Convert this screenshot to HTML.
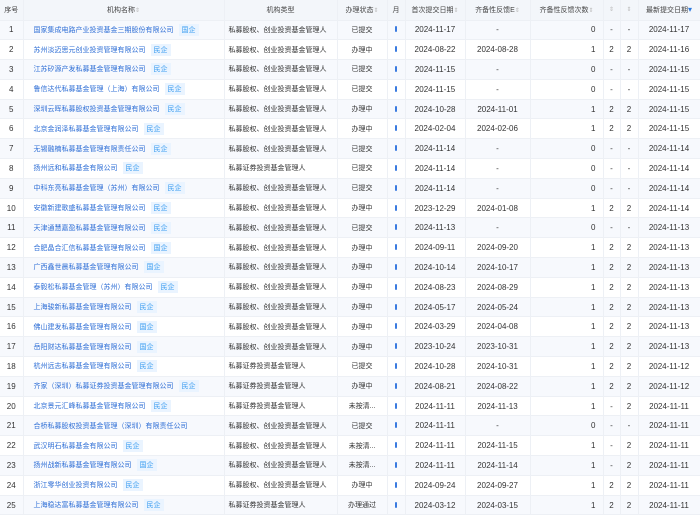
<!DOCTYPE html><html><head><meta charset="utf-8"><style>
*{margin:0;padding:0;box-sizing:border-box}
body{width:700px;height:516px;overflow:hidden;background:#fff;font-family:"Liberation Sans","Noto Sans CJK SC",sans-serif;font-size:7px;color:#333}
table{border-collapse:collapse;table-layout:fixed;width:700px}
td,th{height:19.8px;white-space:nowrap;overflow:hidden;border-bottom:1px solid #edf0f5;border-right:1px solid #edf0f5;text-align:center;padding:0 2px;font-weight:normal}
th{background:#f3f6fa;color:#444;height:20px}
tr:nth-child(even) td{background:#f7f9fd}
td{font-size:8px}
td.n,td.t,td.c{font-size:7px}
td.n{text-align:left;color:#2f6fd6;padding-left:10px}
td.t{text-align:left;padding-left:4px}
td.r{text-align:right;padding-right:7px}
td.fx,th.fx{box-shadow:3px 0 4px -1px rgba(0,0,0,.12)}
.g{display:inline-block;background:#eaf4ff;color:#3a9cf0;padding:1px 3px;margin-left:5px}
.s{color:#bbb;font-size:6px}
.b{display:inline-block;width:2px;height:6px;background:#3a7be0;border-radius:1px}
.d{color:#2f7be0;font-size:8px}
</style></head><body><table>
<colgroup><col style="width:23px"><col style="width:201px"><col style="width:113px"><col style="width:50px"><col style="width:18px"><col style="width:60px"><col style="width:65px"><col style="width:73px"><col style="width:17px"><col style="width:18px"><col style="width:62px"></colgroup>
<tr><th>序号</th><th class="fx">机构名称<span class="s">⇕</span></th><th>机构类型</th><th>办理状态<span class="s">⇕</span></th><th>月</th><th>首次提交日期<span class="s">⇕</span></th><th>齐备性反馈E<span class="s">⇕</span></th><th>齐备性反馈次数<span class="s">⇕</span></th><th><span class="s">⇕</span></th><th><span class="s">⇕</span></th><th>最新提交日期<span class="d">▾</span></th></tr>
<tr><td>1</td><td class="n fx">国家集成电路产业投资基金三期股份有限公司<span class="g">国企</span></td><td class="t">私募股权、创业投资基金管理人</td><td class="c">已提交</td><td><i class="b"></i></td><td>2024-11-17</td><td>-</td><td class="r">0</td><td>-</td><td>-</td><td>2024-11-17</td></tr>
<tr><td>2</td><td class="n fx">苏州淡迈思元创业投资管理有限公司<span class="g">民企</span></td><td class="t">私募股权、创业投资基金管理人</td><td class="c">办理中</td><td><i class="b"></i></td><td>2024-08-22</td><td>2024-08-28</td><td class="r">1</td><td>2</td><td>2</td><td>2024-11-16</td></tr>
<tr><td>3</td><td class="n fx">江苏矽源产发私募基金管理有限公司<span class="g">民企</span></td><td class="t">私募股权、创业投资基金管理人</td><td class="c">已提交</td><td><i class="b"></i></td><td>2024-11-15</td><td>-</td><td class="r">0</td><td>-</td><td>-</td><td>2024-11-15</td></tr>
<tr><td>4</td><td class="n fx">鲁信达代私募基金管理（上海）有限公司<span class="g">民企</span></td><td class="t">私募股权、创业投资基金管理人</td><td class="c">已提交</td><td><i class="b"></i></td><td>2024-11-15</td><td>-</td><td class="r">0</td><td>-</td><td>-</td><td>2024-11-15</td></tr>
<tr><td>5</td><td class="n fx">深圳云晖私募股权投资基金管理有限公司<span class="g">民企</span></td><td class="t">私募股权、创业投资基金管理人</td><td class="c">办理中</td><td><i class="b"></i></td><td>2024-10-28</td><td>2024-11-01</td><td class="r">1</td><td>2</td><td>2</td><td>2024-11-15</td></tr>
<tr><td>6</td><td class="n fx">北京金润泽私募基金管理有限公司<span class="g">民企</span></td><td class="t">私募股权、创业投资基金管理人</td><td class="c">办理中</td><td><i class="b"></i></td><td>2024-02-04</td><td>2024-02-06</td><td class="r">1</td><td>2</td><td>2</td><td>2024-11-15</td></tr>
<tr><td>7</td><td class="n fx">无锡融楠私募基金管理有限责任公司<span class="g">民企</span></td><td class="t">私募股权、创业投资基金管理人</td><td class="c">已提交</td><td><i class="b"></i></td><td>2024-11-14</td><td>-</td><td class="r">0</td><td>-</td><td>-</td><td>2024-11-14</td></tr>
<tr><td>8</td><td class="n fx">扬州远和私募基金有限公司<span class="g">民企</span></td><td class="t">私募证券投资基金管理人</td><td class="c">已提交</td><td><i class="b"></i></td><td>2024-11-14</td><td>-</td><td class="r">0</td><td>-</td><td>-</td><td>2024-11-14</td></tr>
<tr><td>9</td><td class="n fx">中科东亮私募基金管理（苏州）有限公司<span class="g">民企</span></td><td class="t">私募股权、创业投资基金管理人</td><td class="c">已提交</td><td><i class="b"></i></td><td>2024-11-14</td><td>-</td><td class="r">0</td><td>-</td><td>-</td><td>2024-11-14</td></tr>
<tr><td>10</td><td class="n fx">安徽新建歌盛私募基金管理有限公司<span class="g">民企</span></td><td class="t">私募股权、创业投资基金管理人</td><td class="c">办理中</td><td><i class="b"></i></td><td>2023-12-29</td><td>2024-01-08</td><td class="r">1</td><td>2</td><td>2</td><td>2024-11-14</td></tr>
<tr><td>11</td><td class="n fx">天津通慧嘉盈私募基金管理有限公司<span class="g">民企</span></td><td class="t">私募股权、创业投资基金管理人</td><td class="c">已提交</td><td><i class="b"></i></td><td>2024-11-13</td><td>-</td><td class="r">0</td><td>-</td><td>-</td><td>2024-11-13</td></tr>
<tr><td>12</td><td class="n fx">合肥晶合汇信私募基金管理有限公司<span class="g">国企</span></td><td class="t">私募股权、创业投资基金管理人</td><td class="c">办理中</td><td><i class="b"></i></td><td>2024-09-11</td><td>2024-09-20</td><td class="r">1</td><td>2</td><td>2</td><td>2024-11-13</td></tr>
<tr><td>13</td><td class="n fx">广西鑫世晨私募基金管理有限公司<span class="g">国企</span></td><td class="t">私募股权、创业投资基金管理人</td><td class="c">办理中</td><td><i class="b"></i></td><td>2024-10-14</td><td>2024-10-17</td><td class="r">1</td><td>2</td><td>2</td><td>2024-11-13</td></tr>
<tr><td>14</td><td class="n fx">泰毅松私募基金管理（苏州）有限公司<span class="g">民企</span></td><td class="t">私募股权、创业投资基金管理人</td><td class="c">办理中</td><td><i class="b"></i></td><td>2024-08-23</td><td>2024-08-29</td><td class="r">1</td><td>2</td><td>2</td><td>2024-11-13</td></tr>
<tr><td>15</td><td class="n fx">上海骏新私募基金管理有限公司<span class="g">民企</span></td><td class="t">私募股权、创业投资基金管理人</td><td class="c">办理中</td><td><i class="b"></i></td><td>2024-05-17</td><td>2024-05-24</td><td class="r">1</td><td>2</td><td>2</td><td>2024-11-13</td></tr>
<tr><td>16</td><td class="n fx">佛山建发私募基金管理有限公司<span class="g">国企</span></td><td class="t">私募股权、创业投资基金管理人</td><td class="c">办理中</td><td><i class="b"></i></td><td>2024-03-29</td><td>2024-04-08</td><td class="r">1</td><td>2</td><td>2</td><td>2024-11-13</td></tr>
<tr><td>17</td><td class="n fx">岳阳财达私募基金管理有限公司<span class="g">国企</span></td><td class="t">私募股权、创业投资基金管理人</td><td class="c">办理中</td><td><i class="b"></i></td><td>2023-10-24</td><td>2023-10-31</td><td class="r">1</td><td>2</td><td>2</td><td>2024-11-13</td></tr>
<tr><td>18</td><td class="n fx">杭州远志私募基金管理有限公司<span class="g">民企</span></td><td class="t">私募证券投资基金管理人</td><td class="c">已提交</td><td><i class="b"></i></td><td>2024-10-28</td><td>2024-10-31</td><td class="r">1</td><td>2</td><td>2</td><td>2024-11-12</td></tr>
<tr><td>19</td><td class="n fx">齐家（深圳）私募证券投资基金管理有限公司<span class="g">民企</span></td><td class="t">私募证券投资基金管理人</td><td class="c">办理中</td><td><i class="b"></i></td><td>2024-08-21</td><td>2024-08-22</td><td class="r">1</td><td>2</td><td>2</td><td>2024-11-12</td></tr>
<tr><td>20</td><td class="n fx">北京景元汇峰私募基金管理有限公司<span class="g">民企</span></td><td class="t">私募证券投资基金管理人</td><td class="c">未按清...</td><td><i class="b"></i></td><td>2024-11-11</td><td>2024-11-13</td><td class="r">1</td><td>-</td><td>2</td><td>2024-11-11</td></tr>
<tr><td>21</td><td class="n fx">合桥私募股权投资基金管理（深圳）有限责任公司</td><td class="t">私募股权、创业投资基金管理人</td><td class="c">已提交</td><td><i class="b"></i></td><td>2024-11-11</td><td>-</td><td class="r">0</td><td>-</td><td>-</td><td>2024-11-11</td></tr>
<tr><td>22</td><td class="n fx">武汉明石私募基金有限公司<span class="g">民企</span></td><td class="t">私募股权、创业投资基金管理人</td><td class="c">未按清...</td><td><i class="b"></i></td><td>2024-11-11</td><td>2024-11-15</td><td class="r">1</td><td>-</td><td>2</td><td>2024-11-11</td></tr>
<tr><td>23</td><td class="n fx">扬州战新私募基金管理有限公司<span class="g">国企</span></td><td class="t">私募股权、创业投资基金管理人</td><td class="c">未按清...</td><td><i class="b"></i></td><td>2024-11-11</td><td>2024-11-14</td><td class="r">1</td><td>-</td><td>2</td><td>2024-11-11</td></tr>
<tr><td>24</td><td class="n fx">浙江零华创业投资有限公司<span class="g">民企</span></td><td class="t">私募股权、创业投资基金管理人</td><td class="c">办理中</td><td><i class="b"></i></td><td>2024-09-24</td><td>2024-09-27</td><td class="r">1</td><td>2</td><td>2</td><td>2024-11-11</td></tr>
<tr><td>25</td><td class="n fx">上海稳达富私募基金管理有限公司<span class="g">民企</span></td><td class="t">私募证券投资基金管理人</td><td class="c">办理通过</td><td><i class="b"></i></td><td>2024-03-12</td><td>2024-03-15</td><td class="r">1</td><td>2</td><td>2</td><td>2024-11-11</td></tr>
</table></body></html>
